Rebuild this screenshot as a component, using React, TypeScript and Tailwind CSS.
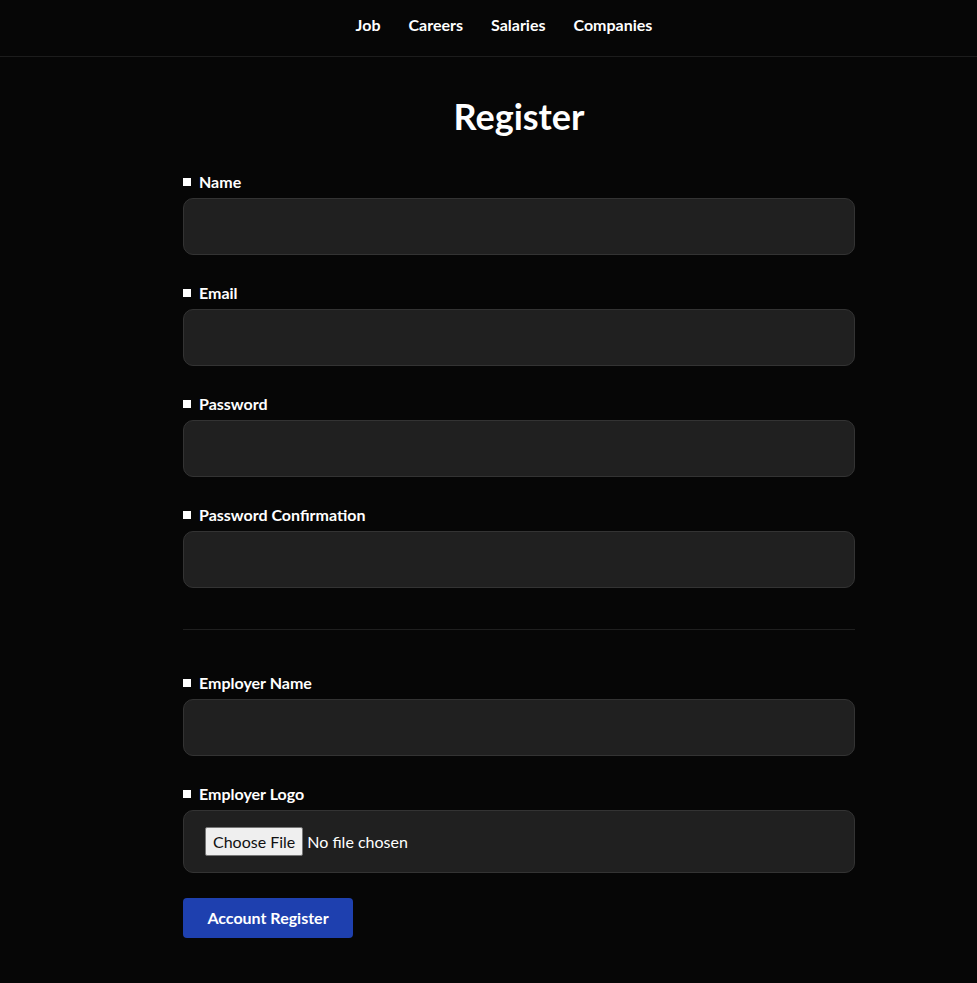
import React from "react";

const font = { fontFamily: "Lato, 'Noto Sans', sans-serif" };

function Label({ text }: { text: string }) {
  return (
    <div className="flex items-center gap-2 h-[20px]">
      <span className="w-[8px] h-[8px] bg-white inline-block" />
      <span className="text-[16px] font-bold text-white leading-5">{text}</span>
    </div>
  );
}

function Field({ label, type = "text" }: { label: string; type?: string }) {
  return (
    <div className="flex flex-col gap-[6px]">
      <Label text={label} />
      <input
        type={type}
        className="h-[57px] w-full rounded-[10px] border border-[#333333] bg-[#202020] px-4 text-white outline-none"
      />
    </div>
  );
}

export default function App() {
  return (
    <div className="min-h-[983px] bg-[#060606] text-white" style={font}>
      <nav className="h-[57px] pb-[6px] border-b border-[#1c1c1c] flex items-center justify-center pl-[31px] gap-[28px]">
        <a className="text-[16px] font-bold">Job</a>
        <a className="text-[16px] font-bold">Careers</a>
        <a className="text-[16px] font-bold">Salaries</a>
        <a className="text-[16px] font-bold">Companies</a>
      </nav>
      <div className="pl-[61px]">
        <div className="mx-auto max-w-[672px] pt-[37px]">
          <h1 className="text-[36px] font-bold text-center leading-[44px]">Register</h1>
          <form className="mt-[34px] flex flex-col">
            <div className="flex flex-col gap-[28px]">
              <Field label="Name" />
              <Field label="Email" type="email" />
              <Field label="Password" type="password" />
              <Field label="Password Confirmation" type="password" />
            </div>
            <hr className="mt-[41px] border-0 border-t border-[#1f1f1f]" />
            <div className="mt-[43px] flex flex-col gap-[28px]">
              <Field label="Employer Name" />
              <div className="flex flex-col gap-[6px]">
                <Label text="Employer Logo" />
                <div className="h-[63px] rounded-[10px] border border-[#333333] bg-[#202020] px-[21px] flex items-center">
                  <input
                    type="file"
                    className="text-[16px] text-white file:mr-[4px] file:h-[29px] file:px-[7px] file:bg-[#efefef] file:text-[#111] file:border file:border-solid file:border-[#767676] file:rounded-[2px] file:text-[16px] file:font-normal"
                    style={{ fontFamily: "Lato, sans-serif" }}
                  />
                </div>
              </div>
            </div>
            <div className="mt-[25px]">
              <button
                type="button"
                className="h-[40px] w-[170px] rounded-[4px] bg-[#1e40af] text-[16px] font-bold text-white"
              >
                Account Register
              </button>
            </div>
          </form>
        </div>
      </div>
    </div>
  );
}
